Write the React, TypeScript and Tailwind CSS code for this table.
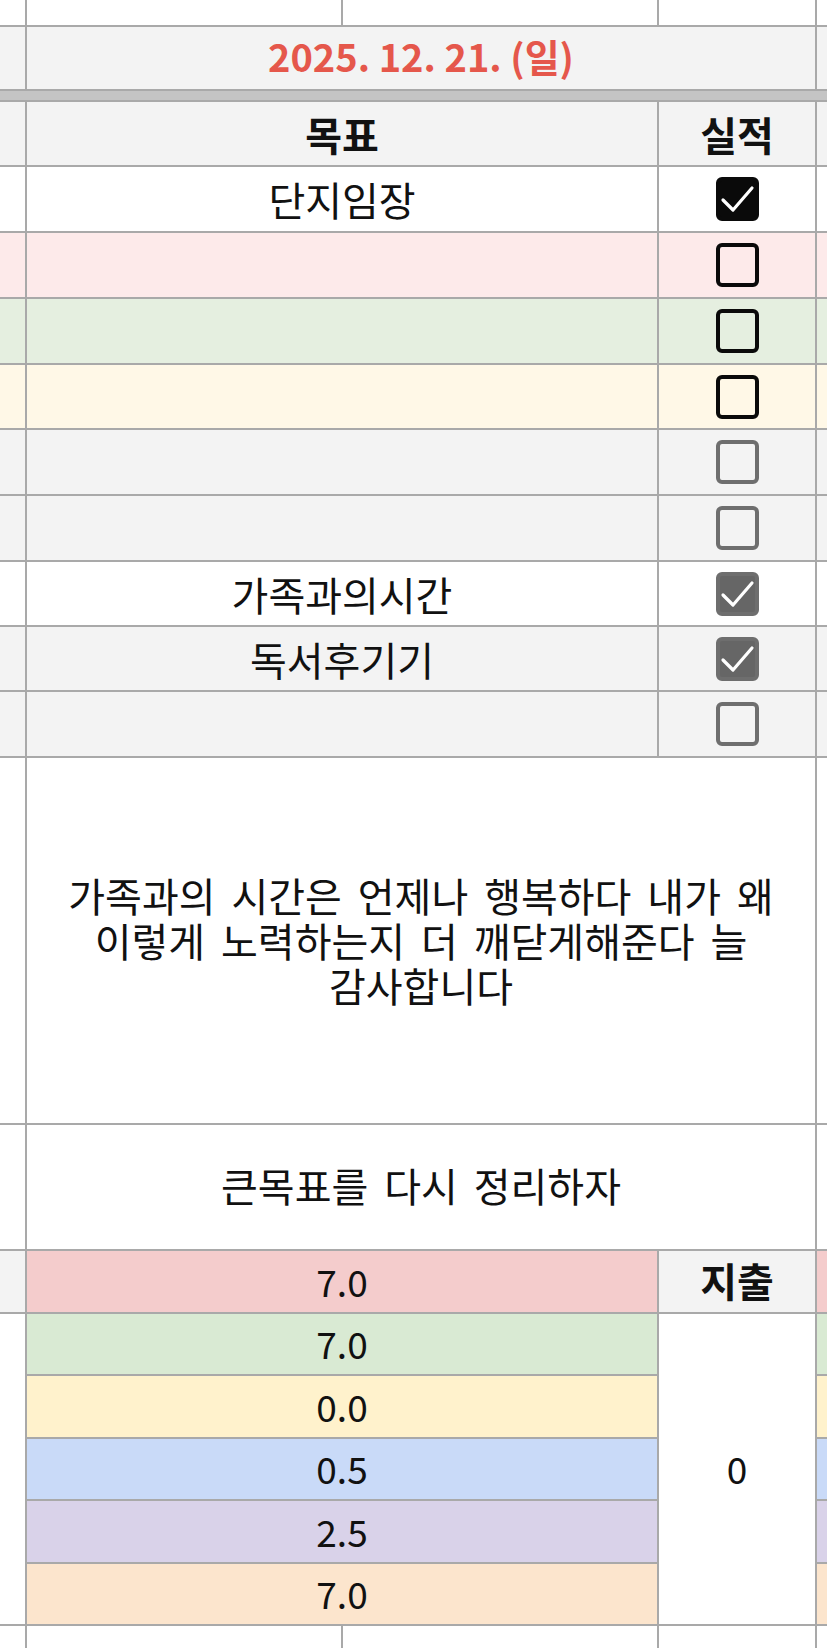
import React from "react";

type Check = "black" | "black-on" | "gray" | "gray-on";

const goals: { bg: string; text: string; check: Check }[] = [
  { bg: "bg-white", text: "단지임장", check: "black-on" },
  { bg: "bg-[#fdeaea]", text: "", check: "black" },
  { bg: "bg-[#e5efe0]", text: "", check: "black" },
  { bg: "bg-[#fff8e7]", text: "", check: "black" },
  { bg: "bg-[#f3f3f3]", text: "", check: "gray" },
  { bg: "bg-[#f3f3f3]", text: "", check: "gray" },
  { bg: "bg-white", text: "가족과의시간", check: "gray-on" },
  { bg: "bg-[#f3f3f3]", text: "독서후기기", check: "gray-on" },
  { bg: "bg-[#f3f3f3]", text: "", check: "gray" },
];

const hours = [
  { v: "7.0", bg: "bg-[#f4cccc]" },
  { v: "7.0", bg: "bg-[#d9ead3]" },
  { v: "0.0", bg: "bg-[#fff2cc]" },
  { v: "0.5", bg: "bg-[#c9daf8]" },
  { v: "2.5", bg: "bg-[#d9d2e9]" },
  { v: "7.0", bg: "bg-[#fce5cd]" },
];

const CheckBox = ({ kind }: { kind: Check }) => {
  const dark = kind === "black" || kind === "black-on";
  const on = kind === "black-on" || kind === "gray-on";
  const border = dark ? "border-[#0a0a0a]" : "border-[#6e6e6e]";
  const fill = on ? (dark ? "bg-[#0a0a0a]" : "bg-[#666666]") : "bg-transparent";
  return (
    <div className={`w-[43px] h-[44px] rounded-[6px] border-[4px] ${border} ${fill} flex items-center justify-center`}>
      {on && (
        <svg width="35" height="36" viewBox="0 0 35 36" fill="none">
          <polyline points="3,19 13,29 32,7" stroke="white" strokeWidth="3.2" strokeLinecap="round" strokeLinejoin="round" />
        </svg>
      )}
    </div>
  );
};

const cell = "flex items-center justify-center";

export default function App() {
  return (
    <div
      className="w-[827px] h-[1648px] overflow-hidden bg-white text-[#111] text-[40px] [word-spacing:7px]"
      style={{ fontFamily: '"Noto Sans CJK KR", "Noto Sans", sans-serif' }}
    >
      <div className="grid grid-cols-[25px_314px_314px_156px_10px] grid-rows-[25px_62px_9px_63px_64px_64px_64px_63px_64px_64px_63px_63px_64px_365px_124px_61px_60px_61px_60px_61px_60px_23px] gap-[2px] bg-[#a9a9a9]">
        {/* top partial row */}
        <div className="bg-white" />
        <div className="bg-white" />
        <div className="bg-white" />
        <div className="bg-white" />
        <div className="bg-white" />

        {/* date */}
        <div className="bg-[#f3f3f3]" />
        <div className={`${cell} col-span-3 bg-[#f3f3f3] font-bold text-[#e5574b] text-[38px] pb-[6px] [word-spacing:0px]`}>
          2025. 12. 21. (일)
        </div>
        <div className="bg-[#f3f3f3]" />

        {/* band */}
        <div className="col-span-5 bg-[#c4c4c4]" />

        {/* header */}
        <div className="bg-[#f3f3f3]" />
        <div className={`${cell} col-span-2 bg-[#f3f3f3] font-bold`}>목표</div>
        <div className={`${cell} bg-[#f3f3f3] font-bold`}>실적</div>
        <div className="bg-[#f3f3f3]" />

        {/* goals */}
        {goals.map((g, i) => (
          <React.Fragment key={i}>
            <div className={g.bg} />
            <div className={`${cell} col-span-2 ${g.bg}`}>{g.text}</div>
            <div className={`${cell} ${g.bg}`}>
              <CheckBox kind={g.check} />
            </div>
            <div className={g.bg} />
          </React.Fragment>
        ))}

        {/* diary */}
        <div className="bg-white" />
        <div className={`${cell} col-span-3 bg-white text-center leading-[45px]`}>
          <p>
            가족과의 시간은 언제나 행복하다 내가 왜
            <br />
            이렇게 노력하는지 더 깨닫게해준다 늘
            <br />
            감사합니다
          </p>
        </div>
        <div className="bg-white" />

        {/* big goal */}
        <div className="bg-white" />
        <div className={`${cell} col-span-3 bg-white pb-[4px]`}>큰목표를 다시 정리하자</div>
        <div className="bg-white" />

        {/* hours + expense */}
        <div className="bg-[#f3f3f3]" />
        <div className={`${cell} col-span-2 text-[37px] ${hours[0].bg}`}>{hours[0].v}</div>
        <div className={`${cell} bg-[#f3f3f3] font-bold pb-[4px]`}>지출</div>
        <div className={hours[0].bg} />

        <div className="row-span-5 bg-white" />
        <div className={`${cell} col-span-2 text-[37px] ${hours[1].bg}`}>{hours[1].v}</div>
        <div className={`${cell} row-span-5 bg-white text-[37px]`}>0</div>
        <div className={hours[1].bg} />
        {hours.slice(2).map((h, i) => (
          <React.Fragment key={i}>
            <div className={`${cell} col-span-2 text-[37px] ${h.bg}`}>{h.v}</div>
            <div className={h.bg} />
          </React.Fragment>
        ))}

        {/* bottom partial row */}
        <div className="bg-white" />
        <div className="bg-white" />
        <div className="bg-white" />
        <div className="bg-white" />
        <div className="bg-white" />
      </div>
    </div>
  );
}
